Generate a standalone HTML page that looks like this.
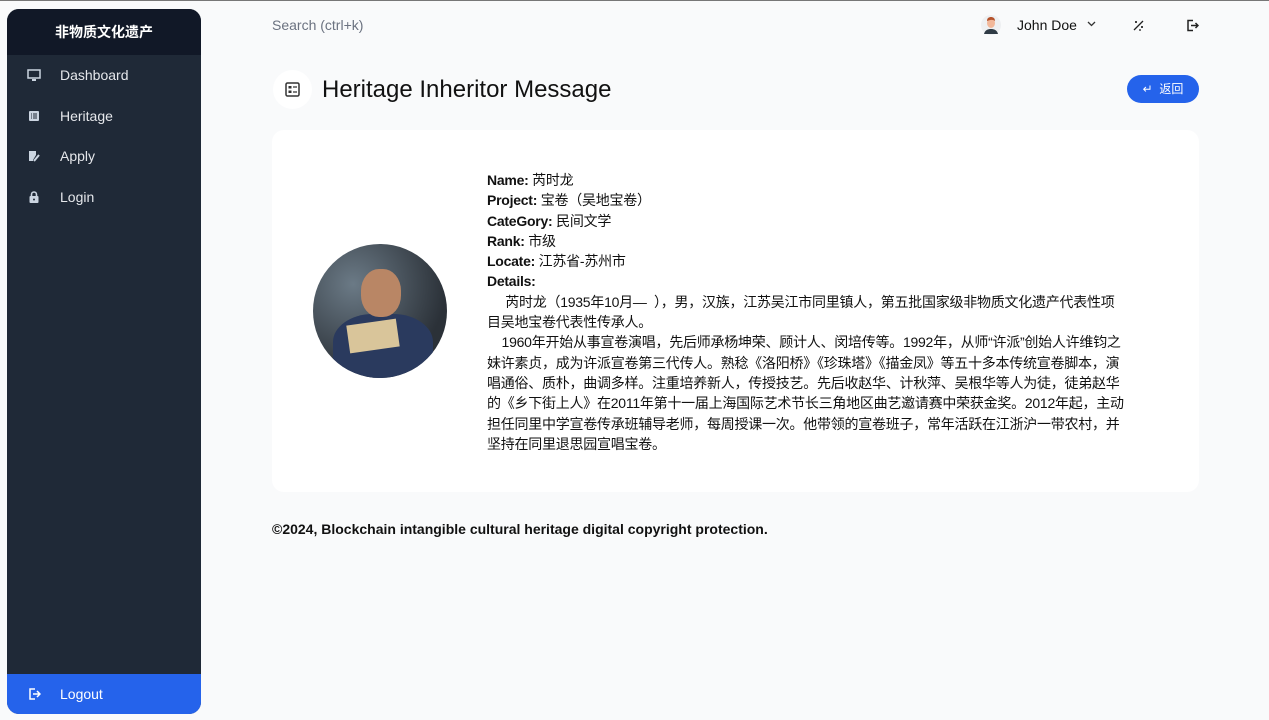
<!DOCTYPE html>
<html><head><meta charset="utf-8"><style>
*{box-sizing:border-box;margin:0;padding:0}
body{width:1269px;height:720px;background:#f9fafb;font-family:"Liberation Sans","Noto Sans CJK SC",sans-serif;position:relative;overflow:hidden;border-top:1px solid #777}
.sb{position:absolute;left:7px;top:8px;width:194px;height:705px;background:#1f2937;border-radius:12px;overflow:hidden}
.sbh{height:46px;background:#111827;color:#fff;font-weight:bold;font-size:14px;text-align:center;line-height:46px}
.it{height:40.5px;display:flex;align-items:center;color:#e5e7eb;font-size:14px}
.it svg{margin-left:20px;margin-right:19px}
.lo{position:absolute;bottom:0;left:0;right:0;height:40px;background:#2563eb}
.top{position:absolute;top:16px;font-size:14px}
.card{position:absolute;left:272px;top:129px;width:927px;height:362px;background:#fff;border-radius:12px}
.txt{position:absolute;left:487px;top:169px;width:640px;font-size:14px;line-height:20.3px;color:#111;letter-spacing:-0.25px}
</style></head><body>
<div class="sb">
<div class="sbh">非物质文化遗产</div>
<div class="it" style="margin-top:0"><svg width="14" height="14" viewBox="0 0 14 14"><rect x="1" y="2" width="12" height="8" fill="none" stroke="#cbd5e1" stroke-width="1.5"/><rect x="5" y="11" width="4" height="2" fill="#cbd5e1"/></svg>Dashboard</div>
<div class="it"><svg width="14" height="14" viewBox="0 0 14 14"><rect x="2" y="2" width="10" height="10" rx="1" fill="#cbd5e1"/><path d="M4 5h1M6 5h4M4 7h1M6 7h4M4 9h1M6 9h4" stroke="#1f2937"/></svg>Heritage</div>
<div class="it"><svg width="14" height="14" viewBox="0 0 14 14"><path d="M2 2h7v4l-3 5v1H2z" fill="#cbd5e1"/><path d="M7 12l5-6" stroke="#cbd5e1" stroke-width="2"/></svg>Apply</div>
<div class="it"><svg width="14" height="14" viewBox="0 0 14 14"><rect x="2.5" y="6" width="9" height="7" rx="1" fill="#cbd5e1"/><path d="M4.5 6V4.5a2.5 2.5 0 015 0V6" fill="none" stroke="#cbd5e1" stroke-width="1.6"/><circle cx="7" cy="9.5" r="1" fill="#1f2937"/></svg>Login</div>
<div class="lo it"><svg width="14" height="14" viewBox="0 0 14 14"><path d="M8 2H3v10h5M6 7h7M10 4l3 3-3 3" fill="none" stroke="#fff" stroke-width="1.5"/></svg><span style="color:#fff">Logout</span></div>
</div>
<div class="top" style="left:272px;color:#6b7280">Search (ctrl+k)</div>
<svg style="position:absolute;left:981px;top:13px" width="20" height="22" viewBox="0 0 20 22"><circle cx="10" cy="11" r="10" fill="#eef0f2"/><path d="M3 20c1-4 4-5 7-5s6 1 7 5z" fill="#2f3b45"/><ellipse cx="10" cy="9" rx="4" ry="5" fill="#f2b89a"/><path d="M6 7c0-3 2-4 4-4s4 1 4 4c-1-1-3-2-8 0z" fill="#b5532c"/></svg>
<div class="top" style="left:1017px;color:#111">John Doe</div>
<svg style="position:absolute;left:1087px;top:20px" width="9" height="6" viewBox="0 0 9 6"><path d="M1 1l3.5 3.5L8 1" fill="none" stroke="#333" stroke-width="1.3"/></svg>
<svg style="position:absolute;left:1132px;top:18px" width="13" height="13" viewBox="0 0 13 13"><path d="M2 11L11 2M3 3h2M4 2v2M9 8h2M10 7v2M7 11h2" stroke="#222" stroke-width="1.3"/></svg>
<svg style="position:absolute;left:1186px;top:18px" width="13" height="13" viewBox="0 0 13 13"><path d="M7 1.5H2v10h5M5 6.5h7M9.5 4l2.5 2.5L9.5 9" fill="none" stroke="#222" stroke-width="1.5"/></svg>
<div style="position:absolute;left:273px;top:69px;width:39px;height:39px;border-radius:50%;background:#fff"></div>
<svg style="position:absolute;left:285px;top:81px" width="15" height="15" viewBox="0 0 15 15"><rect x="1" y="1" width="13" height="13" rx="1.5" fill="none" stroke="#333" stroke-width="1.5"/><rect x="3.5" y="4" width="3" height="2.5" fill="#333"/><rect x="3.5" y="8.5" width="3" height="2.5" fill="#333"/><path d="M8 5h4M8 10h4" stroke="#333" stroke-width="1.3"/></svg>
<div style="position:absolute;left:322px;top:75px;font-size:24px;color:#111">Heritage Inheritor Message</div>
<div style="position:absolute;left:1127px;top:74px;width:72px;height:28px;border-radius:14px;background:#2563eb;color:#fff;font-size:12px;line-height:28px;text-align:center">↵&nbsp; 返回</div>
<div class="card"></div>
<div style="position:absolute;left:313px;top:243px;width:134px;height:134px;border-radius:50%;overflow:hidden;background:radial-gradient(circle at 30% 30%,#6b7a86,#2b3138 70%)">
<div style="position:absolute;left:20px;top:70px;width:100px;height:70px;border-radius:40% 40% 0 0;background:#2a3a5e"></div>
<div style="position:absolute;left:48px;top:25px;width:40px;height:48px;border-radius:45%;background:#b98665"></div>
<div style="position:absolute;left:35px;top:78px;width:50px;height:28px;background:#d9c59a;transform:rotate(-8deg)"></div>
</div>
<div class="txt">
<b>Name:</b> 芮时龙<br><b>Project:</b> 宝卷（吴地宝卷）<br><b>CateGory:</b> 民间文学<br><b>Rank:</b> 市级<br><b>Locate:</b> 江苏省-苏州市<br><b>Details:</b><br>
&nbsp;&nbsp;&nbsp;&nbsp;&nbsp;芮时龙（1935年10月—&nbsp; ），男，汉族，江苏吴江市同里镇人，第五批国家级非物质文化遗产代表性项目吴地宝卷代表性传承人。<br>
&nbsp;&nbsp;&nbsp;&nbsp;1960年开始从事宣卷演唱，先后师承杨坤荣、顾计人、闵培传等。1992年，从师“许派”创始人许维钧之妹许素贞，成为许派宣卷第三代传人。熟稔《洛阳桥》《珍珠塔》《描金凤》等五十多本传统宣卷脚本，演唱通俗、质朴，曲调多样。注重培养新人，传授技艺。先后收赵华、计秋萍、吴根华等人为徒，徒弟赵华的《乡下街上人》在2011年第十一届上海国际艺术节长三角地区曲艺邀请赛中荣获金奖。2012年起，主动担任同里中学宣卷传承班辅导老师，每周授课一次。他带领的宣卷班子，常年活跃在江浙沪一带农村，并坚持在同里退思园宣唱宝卷。
</div>
<div style="position:absolute;left:272px;top:520px;font-size:14px;font-weight:bold;color:#111">©2024, Blockchain intangible cultural heritage digital copyright protection.</div>
</body></html>
